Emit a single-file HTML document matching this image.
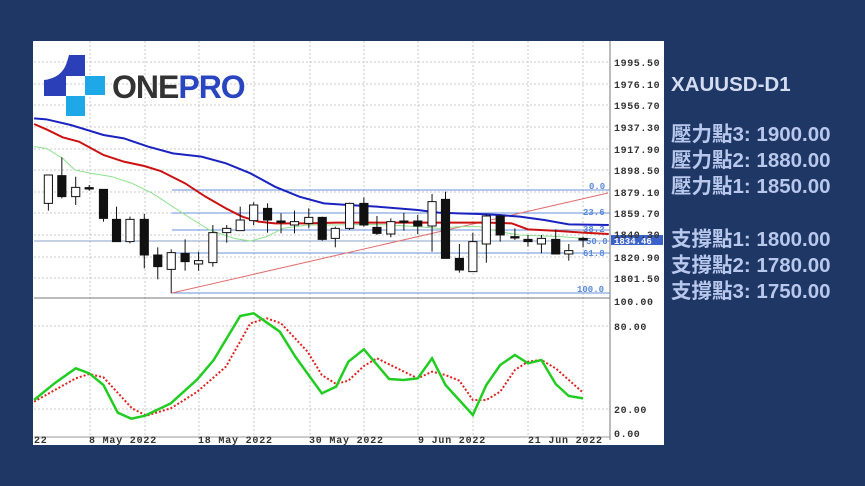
<!DOCTYPE html>
<html><head><meta charset="utf-8"><style>
body{margin:0;width:865px;height:486px;background:#1e3765;overflow:hidden;position:relative;font-family:"Liberation Sans","Noto Sans CJK TC",sans-serif}
.t{position:absolute;left:671px;color:#b8c7ec;font-size:20.5px;font-weight:bold;white-space:nowrap;line-height:20px}
</style></head><body>
<svg width="865" height="486" style="position:absolute;left:0;top:0">
<rect x="33" y="41" width="631" height="404" fill="#fff"/>
<g stroke="#c8c8c8" stroke-dasharray="2,2" stroke-width="1">
<line x1="90" y1="41" x2="90" y2="435"/><line x1="145" y1="41" x2="145" y2="435"/><line x1="199" y1="41" x2="199" y2="435"/><line x1="254" y1="41" x2="254" y2="435"/><line x1="310" y1="41" x2="310" y2="435"/><line x1="364" y1="41" x2="364" y2="435"/><line x1="418" y1="41" x2="418" y2="435"/><line x1="473" y1="41" x2="473" y2="435"/><line x1="528" y1="41" x2="528" y2="435"/><line x1="583" y1="41" x2="583" y2="435"/>
<line x1="34" y1="62" x2="610" y2="62"/><line x1="34" y1="84" x2="610" y2="84"/><line x1="34" y1="105" x2="610" y2="105"/><line x1="34" y1="127" x2="610" y2="127"/><line x1="34" y1="149" x2="610" y2="149"/><line x1="34" y1="170" x2="610" y2="170"/><line x1="34" y1="192" x2="610" y2="192"/><line x1="34" y1="213" x2="610" y2="213"/><line x1="34" y1="235" x2="610" y2="235"/><line x1="34" y1="257" x2="610" y2="257"/><line x1="34" y1="278" x2="610" y2="278"/>
<line x1="34" y1="326" x2="610" y2="326"/><line x1="34" y1="409" x2="610" y2="409"/>
</g>
<line x1="610" y1="41" x2="610" y2="440" stroke="#777"/>
<line x1="34" y1="298" x2="610" y2="298" stroke="#777"/>
<line x1="34" y1="437" x2="610" y2="437" stroke="#999"/>
<g stroke="#6a8fd8" stroke-width="1">
<line x1="172" y1="190" x2="610" y2="190"/><line x1="172" y1="213" x2="610" y2="213"/><line x1="172" y1="230" x2="610" y2="230"/><line x1="172" y1="253" x2="610" y2="253"/><line x1="172" y1="293" x2="610" y2="293"/>
<line x1="34" y1="241" x2="610" y2="241" stroke="#8aa0c8"/>
</g>
<line x1="172" y1="293" x2="608" y2="193" stroke="#e07070" stroke-width="1"/>
<g font-family="Liberation Mono,monospace" font-size="9" fill="#5a8ad8" font-weight="bold">
<text x="589" y="189">0.0</text><text x="583" y="215">23.6</text><text x="583" y="232">38.2</text><text x="586" y="244">50.0</text><text x="583" y="256">61.8</text><text x="577" y="292">100.0</text>
</g>
<rect x="611" y="235" width="52" height="10" fill="#3a62c8"/>
<g font-family="Liberation Mono,monospace" font-size="10" font-weight="bold" fill="#333" letter-spacing="0.6">
<text x="614" y="66">1995.50</text><text x="614" y="88">1976.10</text><text x="614" y="109">1956.70</text><text x="614" y="131">1937.30</text><text x="614" y="153">1917.90</text><text x="614" y="174">1898.50</text><text x="614" y="196">1879.10</text><text x="614" y="217">1859.70</text><text x="614" y="238">1840.30</text><text x="614" y="244" fill="#fff" font-size="9" letter-spacing="0">1834.46</text><text x="614" y="261">1820.90</text><text x="614" y="282">1801.50</text><text x="614" y="305">100.00</text>
<text x="614" y="330">80.00</text><text x="614" y="413">20.00</text><text x="614" y="437">0.00</text>
</g>
<g font-family="Liberation Mono,monospace" font-size="10" font-weight="bold" fill="#333" letter-spacing="0.8">
<text x="34" y="443">22</text><text x="89" y="443">8 May 2022</text><text x="198" y="443">18 May 2022</text><text x="309" y="443">30 May 2022</text><text x="418" y="443">9 Jun 2022</text><text x="528" y="443">21 Jun 2022</text>
</g>
<g transform="translate(30,40) scale(0.40816,0.33333)" fill="none">
<polyline vector-effect="non-scaling-stroke" stroke="#90e090" stroke-width="1" points="10,320 40,325 80,355 110,390 150,400 200,410 250,430 300,460 350,500 400,540 440,570 500,595 540,603 580,590 620,565 680,555 750,555 820,553 880,555 950,560 1000,565 1050,560 1100,560 1150,575 1200,585 1260,588 1300,590 1355,595"/>
<polyline vector-effect="non-scaling-stroke" stroke="#cc1111" stroke-width="2" points="10,252 40,268 80,292 120,305 180,345 230,365 280,378 320,393 380,430 430,470 480,505 520,530 560,545 600,550 680,550 750,548 820,548 900,548 980,548 1050,548 1120,548 1180,550 1220,568 1280,572 1355,578 1418,582"/>
<polyline vector-effect="non-scaling-stroke" stroke="#1a22c0" stroke-width="2" points="10,235 40,238 100,255 180,285 230,295 290,320 350,340 420,350 480,370 540,400 600,440 660,470 720,490 780,495 850,500 950,510 1000,518 1050,520 1100,522 1150,525 1200,530 1260,540 1320,553 1418,555"/>
<g stroke="#111" stroke-width="1">
<line vector-effect="non-scaling-stroke" x1="45" y1="405" x2="45" y2="512"/><line vector-effect="non-scaling-stroke" x1="78" y1="352" x2="78" y2="475"/><line vector-effect="non-scaling-stroke" x1="112" y1="410" x2="112" y2="495"/><line vector-effect="non-scaling-stroke" x1="145" y1="435" x2="145" y2="452"/><line vector-effect="non-scaling-stroke" x1="180" y1="448" x2="180" y2="545"/><line vector-effect="non-scaling-stroke" x1="212" y1="500" x2="212" y2="605"/><line vector-effect="non-scaling-stroke" x1="245" y1="530" x2="245" y2="610"/><line vector-effect="non-scaling-stroke" x1="280" y1="522" x2="280" y2="685"/><line vector-effect="non-scaling-stroke" x1="313" y1="622" x2="313" y2="718"/><line vector-effect="non-scaling-stroke" x1="346" y1="628" x2="346" y2="760"/><line vector-effect="non-scaling-stroke" x1="380" y1="598" x2="380" y2="692"/><line vector-effect="non-scaling-stroke" x1="413" y1="635" x2="413" y2="692"/><line vector-effect="non-scaling-stroke" x1="448" y1="555" x2="448" y2="680"/><line vector-effect="non-scaling-stroke" x1="482" y1="555" x2="482" y2="608"/><line vector-effect="non-scaling-stroke" x1="515" y1="500" x2="515" y2="572"/><line vector-effect="non-scaling-stroke" x1="548" y1="487" x2="548" y2="555"/><line vector-effect="non-scaling-stroke" x1="582" y1="490" x2="582" y2="578"/><line vector-effect="non-scaling-stroke" x1="615" y1="520" x2="615" y2="580"/><line vector-effect="non-scaling-stroke" x1="648" y1="512" x2="648" y2="580"/><line vector-effect="non-scaling-stroke" x1="683" y1="505" x2="683" y2="565"/><line vector-effect="non-scaling-stroke" x1="716" y1="530" x2="716" y2="602"/><line vector-effect="non-scaling-stroke" x1="748" y1="560" x2="748" y2="622"/><line vector-effect="non-scaling-stroke" x1="783" y1="488" x2="783" y2="570"/><line vector-effect="non-scaling-stroke" x1="818" y1="472" x2="818" y2="560"/><line vector-effect="non-scaling-stroke" x1="850" y1="528" x2="850" y2="585"/><line vector-effect="non-scaling-stroke" x1="884" y1="535" x2="884" y2="592"/><line vector-effect="non-scaling-stroke" x1="916" y1="518" x2="916" y2="572"/><line vector-effect="non-scaling-stroke" x1="950" y1="525" x2="950" y2="582"/><line vector-effect="non-scaling-stroke" x1="985" y1="462" x2="985" y2="635"/><line vector-effect="non-scaling-stroke" x1="1018" y1="455" x2="1018" y2="655"/><line vector-effect="non-scaling-stroke" x1="1052" y1="612" x2="1052" y2="698"/><line vector-effect="non-scaling-stroke" x1="1085" y1="578" x2="1085" y2="695"/><line vector-effect="non-scaling-stroke" x1="1118" y1="522" x2="1118" y2="668"/><line vector-effect="non-scaling-stroke" x1="1152" y1="525" x2="1152" y2="605"/><line vector-effect="non-scaling-stroke" x1="1188" y1="565" x2="1188" y2="600"/><line vector-effect="non-scaling-stroke" x1="1220" y1="585" x2="1220" y2="620"/><line vector-effect="non-scaling-stroke" x1="1253" y1="585" x2="1253" y2="640"/><line vector-effect="non-scaling-stroke" x1="1288" y1="568" x2="1288" y2="642"/><line vector-effect="non-scaling-stroke" x1="1320" y1="612" x2="1320" y2="662"/><line vector-effect="non-scaling-stroke" x1="1355" y1="590" x2="1355" y2="622"/>
</g>
<g stroke="#111">
<rect vector-effect="non-scaling-stroke" x="35" y="405" width="20" height="85" fill="#fff"/>
<rect vector-effect="non-scaling-stroke" x="68" y="407" width="20" height="63" fill="#111"/>
<rect vector-effect="non-scaling-stroke" x="102" y="442" width="20" height="28" fill="#fff"/>
<rect vector-effect="non-scaling-stroke" x="135" y="443" width="20" height="4" fill="#111"/>
<rect vector-effect="non-scaling-stroke" x="170" y="448" width="20" height="87" fill="#111"/>
<rect vector-effect="non-scaling-stroke" x="202" y="538" width="20" height="67" fill="#111"/>
<rect vector-effect="non-scaling-stroke" x="235" y="538" width="20" height="67" fill="#fff"/>
<rect vector-effect="non-scaling-stroke" x="270" y="538" width="20" height="107" fill="#111"/>
<rect vector-effect="non-scaling-stroke" x="303" y="645" width="20" height="35" fill="#111"/>
<rect vector-effect="non-scaling-stroke" x="336" y="638" width="20" height="50" fill="#fff"/>
<rect vector-effect="non-scaling-stroke" x="370" y="640" width="20" height="25" fill="#111"/>
<rect vector-effect="non-scaling-stroke" x="403" y="662" width="20" height="10" fill="#fff"/>
<rect vector-effect="non-scaling-stroke" x="438" y="578" width="20" height="90" fill="#fff"/>
<rect vector-effect="non-scaling-stroke" x="472" y="565" width="20" height="13" fill="#fff"/>
<rect vector-effect="non-scaling-stroke" x="505" y="540" width="20" height="32" fill="#fff"/>
<rect vector-effect="non-scaling-stroke" x="538" y="495" width="20" height="47" fill="#fff"/>
<rect vector-effect="non-scaling-stroke" x="572" y="505" width="20" height="35" fill="#111"/>
<rect vector-effect="non-scaling-stroke" x="605" y="543" width="20" height="4" fill="#111"/>
<rect vector-effect="non-scaling-stroke" x="638" y="545" width="20" height="10" fill="#fff"/>
<rect vector-effect="non-scaling-stroke" x="673" y="532" width="20" height="18" fill="#fff"/>
<rect vector-effect="non-scaling-stroke" x="706" y="532" width="20" height="66" fill="#111"/>
<rect vector-effect="non-scaling-stroke" x="738" y="565" width="20" height="30" fill="#fff"/>
<rect vector-effect="non-scaling-stroke" x="773" y="490" width="20" height="75" fill="#fff"/>
<rect vector-effect="non-scaling-stroke" x="808" y="490" width="20" height="65" fill="#111"/>
<rect vector-effect="non-scaling-stroke" x="840" y="562" width="20" height="18" fill="#111"/>
<rect vector-effect="non-scaling-stroke" x="874" y="545" width="20" height="37" fill="#fff"/>
<rect vector-effect="non-scaling-stroke" x="906" y="543" width="20" height="4" fill="#111"/>
<rect vector-effect="non-scaling-stroke" x="940" y="543" width="20" height="15" fill="#111"/>
<rect vector-effect="non-scaling-stroke" x="975" y="485" width="20" height="73" fill="#fff"/>
<rect vector-effect="non-scaling-stroke" x="1008" y="478" width="20" height="177" fill="#111"/>
<rect vector-effect="non-scaling-stroke" x="1042" y="655" width="20" height="35" fill="#111"/>
<rect vector-effect="non-scaling-stroke" x="1075" y="605" width="20" height="90" fill="#fff"/>
<rect vector-effect="non-scaling-stroke" x="1108" y="528" width="20" height="84" fill="#fff"/>
<rect vector-effect="non-scaling-stroke" x="1142" y="528" width="20" height="57" fill="#111"/>
<rect vector-effect="non-scaling-stroke" x="1178" y="590" width="20" height="4" fill="#111"/>
<rect vector-effect="non-scaling-stroke" x="1210" y="598" width="20" height="7" fill="#111"/>
<rect vector-effect="non-scaling-stroke" x="1243" y="595" width="20" height="17" fill="#fff"/>
<rect vector-effect="non-scaling-stroke" x="1278" y="598" width="20" height="44" fill="#111"/>
<rect vector-effect="non-scaling-stroke" x="1310" y="632" width="20" height="10" fill="#fff"/>
<rect vector-effect="non-scaling-stroke" x="1345" y="595" width="20" height="5" fill="#111"/>
</g>
</g>
<g transform="translate(30,290) scale(0.40816,0.33333)" fill="none">
<polyline vector-effect="non-scaling-stroke" stroke="#dd2222" stroke-width="2" stroke-dasharray="2,2" points="10,335 112,265 145,252 180,262 250,355 285,377 345,355 410,305 480,230 540,100 580,85 615,100 680,185 715,255 750,282 780,272 818,228 850,205 950,265 985,245 1018,255 1052,272 1085,330 1118,330 1152,305 1188,240 1220,215 1253,210 1288,235 1355,308"/>
<polyline vector-effect="non-scaling-stroke" stroke="#22cc22" stroke-width="2.5" points="10,330 60,280 112,235 145,250 180,285 215,368 248,386 282,377 345,340 410,268 450,210 515,78 548,70 612,125 650,200 715,310 750,290 780,215 818,178 880,267 915,270 950,265 985,205 1018,285 1085,375 1118,285 1152,225 1188,195 1220,220 1253,210 1288,282 1320,318 1355,325"/>
</g>
<path d="M44,96 L44,80 Q62,78 67,62 L69,55 L85,55 L85,76 L66,76 L66,96 Z" fill="#2a3fb8"/>
<rect x="85" y="76" width="20" height="19" fill="#1ea8e8"/>
<rect x="66" y="96" width="19" height="20" fill="#1ea8e8"/>
<text x="112" y="98" font-family="Liberation Sans,sans-serif" font-weight="bold" font-size="32" fill="#333" letter-spacing="-1">ONE<tspan fill="#2a45c0">PRO</tspan></text>
</svg>
<div class="t" style="top:75px;color:#d4dcf2">XAUUSD-D1</div>
<div class="t" style="top:125px">壓力點3: 1900.00</div>
<div class="t" style="top:151px">壓力點2: 1880.00</div>
<div class="t" style="top:177px">壓力點1: 1850.00</div>
<div class="t" style="top:230px">支撐點1: 1800.00</div>
<div class="t" style="top:256px">支撐點2: 1780.00</div>
<div class="t" style="top:282px">支撐點3: 1750.00</div>
</body></html>
